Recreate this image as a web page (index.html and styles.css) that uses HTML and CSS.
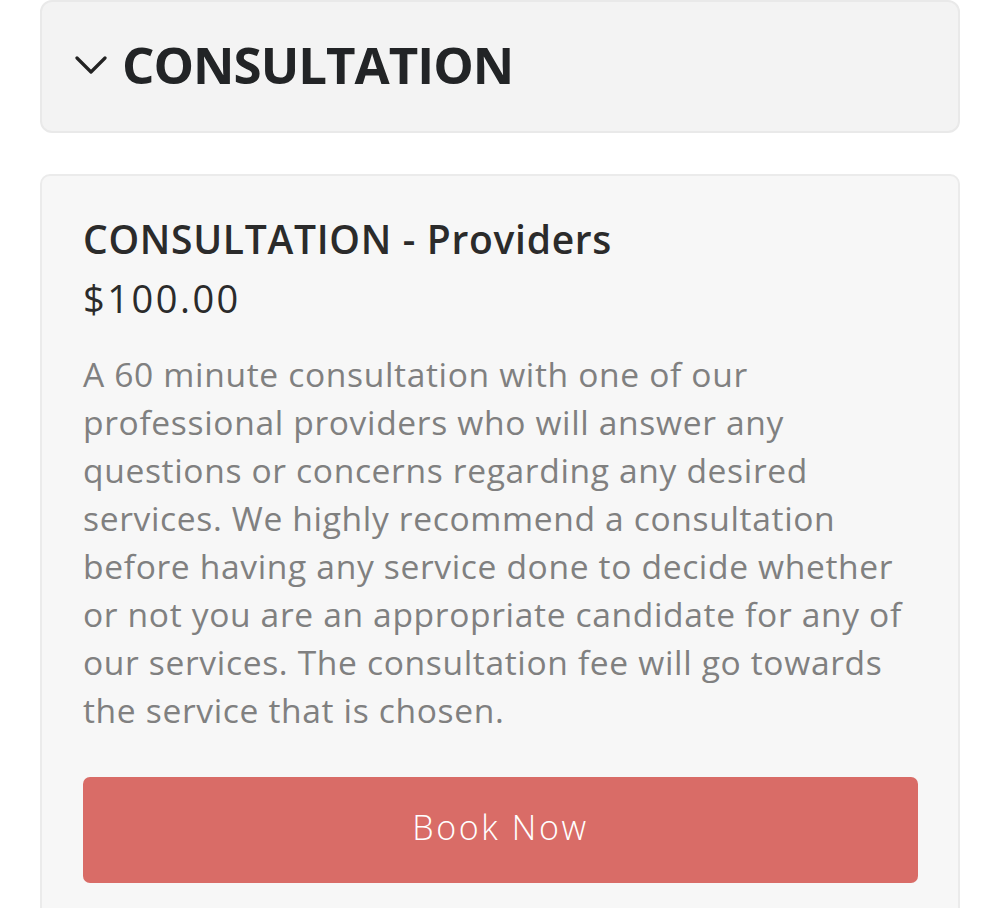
FILE: index.html
```html
<!DOCTYPE html>
<html lang="en">
<head>
<meta charset="utf-8">
<title>Consultation</title>
<link rel="stylesheet" href="styles.css">
</head>
<body>
<main class="page">
  <section class="group-header">
    <svg class="chevron" width="32" height="18" viewBox="0 0 32 18" aria-hidden="true">
      <polyline points="2,2 16,16 30,2" fill="none" stroke="#222" stroke-width="3.2" stroke-linecap="round" stroke-linejoin="round"/>
    </svg>
    <h1 class="group-title">CONSULTATION</h1>
  </section>
  <section class="service-card">
    <h2 class="service-title">CONSULTATION - Providers</h2>
    <div class="service-price">$100.00</div>
    <p class="service-desc">A 60 minute consultation with one of our professional providers who will answer any questions or concerns regarding any desired services. We highly recommend a consultation before having any service done to decide whether or not you are an appropriate candidate for any of our services. The consultation fee will go towards the service that is chosen.</p>
    <button class="book-btn" type="button">Book Now</button>
  </section>
</main>
</body>
</html>
```

FILE: styles.css
```css
html, body {
  margin: 0;
  padding: 0;
  background: #ffffff;
}
body {
  font-family: "Open Sans", "Liberation Sans", sans-serif;
  height: 908px;
  overflow: hidden;
}
.page {
  padding: 0 40px;
  display: flex;
  flex-direction: column;
  gap: 41px;
}
.group-header {
  box-sizing: border-box;
  height: 133px;
  background: #f3f3f3;
  border: 2px solid #e9e9e9;
  border-radius: 12px;
  display: flex;
  align-items: center;
  padding-left: 33px;
  padding-bottom: 5px;
  gap: 15px;
}
.chevron {
  display: block;
  margin-top: 2px;
}
.group-title {
  margin: 0;
  font-size: 51px;
  font-weight: 700;
  color: #222426;
  letter-spacing: -1px;
  line-height: 1;
}
.service-card {
  box-sizing: border-box;
  background: #f7f7f7;
  border: 2px solid #ebebeb;
  border-radius: 10px;
  padding: 37px 40px 40px 41px;
  height: 800px;
}
.service-title {
  margin: 0;
  font-size: 39px;
  font-weight: 600;
  color: #2b2b2b;
  line-height: 52px;
  letter-spacing: 0.7px;
}
.service-price {
  margin-top: 5px;
  font-size: 38px;
  color: #2b2b2b;
  line-height: 56px;
  letter-spacing: 2.5px;
}
.service-desc {
  margin: 24px 0 43px;
  font-size: 33.6px;
  line-height: 48px;
  letter-spacing: 0.65px;
  color: #808080;
}
.book-btn {
  display: block;
  width: 100%;
  height: 106px;
  border: none;
  border-radius: 7px;
  background: #d96c67;
  color: #ffffff;
  font-family: inherit;
  font-size: 34px;
  font-weight: 300;
  letter-spacing: 2.6px;
  padding: 0 0 6px;
}
```
